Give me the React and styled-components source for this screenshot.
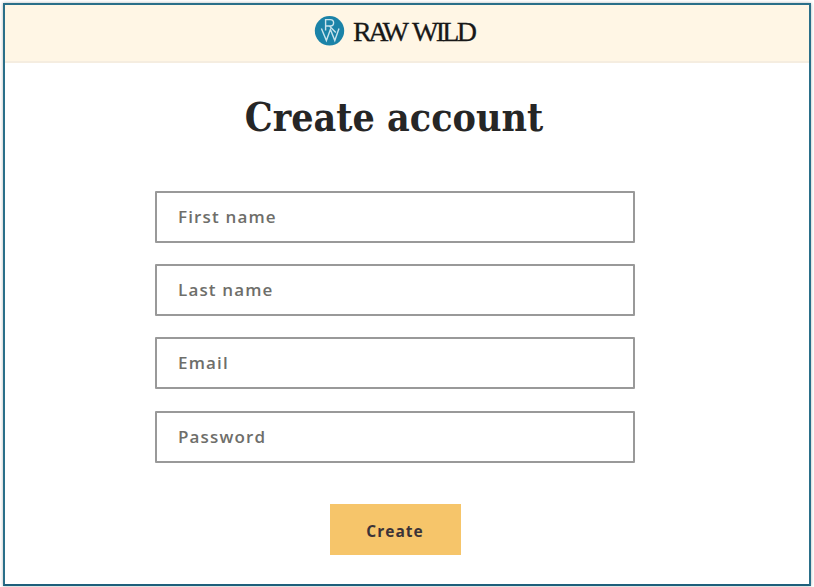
import React from 'react'
import styled, {createGlobalStyle} from 'styled-components'

const GlobalStyle = createGlobalStyle`
    * {
        box-sizing: border-box;
    }

    body {
        margin: 0;
        background-color: #fff;
        font-family: "Open Sans", "Noto Sans", sans-serif;
    }
`

const Page = styled.div`
    width: 814px;
    height: 587px;
    padding: 3px 3px 1px;
    overflow: hidden;
`

const Frame = styled.div`
    display: flex;
    flex-flow: column;
    height: 583px;
    border: 2px solid #2a6f89;
    border-bottom-color: #1d5f7b;
    box-shadow: 0 0 3px rgba(0,0,0,.3);
`

const Header = styled.header`
    display: flex;
    justify-content: center;
    height: 58px;
    padding: 9px 16px 0 0;
    background-color: #fff6e5;
    border-bottom: 2px solid #f5ede0;
`

const Wordmark = styled.text`
    font-family: "Liberation Serif", serif;
    font-size: 28px;
    fill: #181818;
    stroke: #181818;
    stroke-width: .3px;
`

const Logo = () => (
    <svg width="170" height="36" viewBox="0 0 170 36" role="img" aria-label="Raw Wild">
        <circle cx="15.5" cy="16.8" r="14.7" fill="#1b83a8"/>
        <g fill="none" stroke="#c9e3ec" strokeWidth="1.4">
            <path d="M11.6 16.5V5.6h4.8a3.2 3.2 0 0 1 0 6.4H11.6M15.4 12l6.4 6.4"/>
            <path d="M7.4 14.5l5 12 4-11 4.4 11 4.2-12"/>
        </g>
        <Wordmark y="26.5">
            <tspan x="39" textLength="56" lengthAdjust="spacing">RAW</tspan>
            <tspan x="98" textLength="65" lengthAdjust="spacing">WILD</tspan>
        </Wordmark>
    </svg>
)

const Main = styled.main`
    display: flex;
    flex-flow: column;
    align-items: center;
    padding: 29px 24px 0 0;
`

const Title = styled.h1`
    margin: 0 2px 49px 0;
    font-family: "DejaVu Serif Condensed", "DejaVu Serif", serif;
    font-stretch: condensed;
    font-size: 39px;
    font-weight: 700;
    line-height: 50px;
    color: #262626;
    white-space: nowrap;
`

const Form = styled.form`
    display: flex;
    flex-flow: column;
    align-items: center;
    gap: 21px;
`

const Field = styled.input`
    display: block;
    width: 480px;
    height: 52px;
    padding: 0 21px 1px;
    border: 2px solid #999;
    border-radius: 1px;
    background-color: #fff;
    font-family: inherit;
    font-size: 17px;
    font-weight: 600;
    letter-spacing: 1.15px;

    &::placeholder {
        color: #6e6e6a;
        opacity: 1;
    }

    &:nth-of-type(4) {
        margin-top: 1px;
    }
`

const Submit = styled.button`
    width: 131px;
    height: 51px;
    margin-top: 20px;
    padding: 2px 0 0;
    border: none;
    background-color: #f6c56a;
    color: #3b3338;
    font-family: inherit;
    font-size: 15.5px;
    font-weight: 700;
    letter-spacing: 1px;
`

const fields = [
    {label: 'First name', type: 'text'},
    {label: 'Last name', type: 'text'},
    {label: 'Email', type: 'email'},
    {label: 'Password', type: 'password'},
]

const App = () => (
    <Page>
        <GlobalStyle/>
        <Frame>
            <Header>
                <Logo/>
            </Header>
            <Main>
                <Title>Create account</Title>
                <Form>
                    {
                        fields.map(({label, type}) => (
                            <Field key={label} type={type} placeholder={label}/>
                        ))
                    }
                    <Submit type="button">Create</Submit>
                </Form>
            </Main>
        </Frame>
    </Page>
)

export default App
